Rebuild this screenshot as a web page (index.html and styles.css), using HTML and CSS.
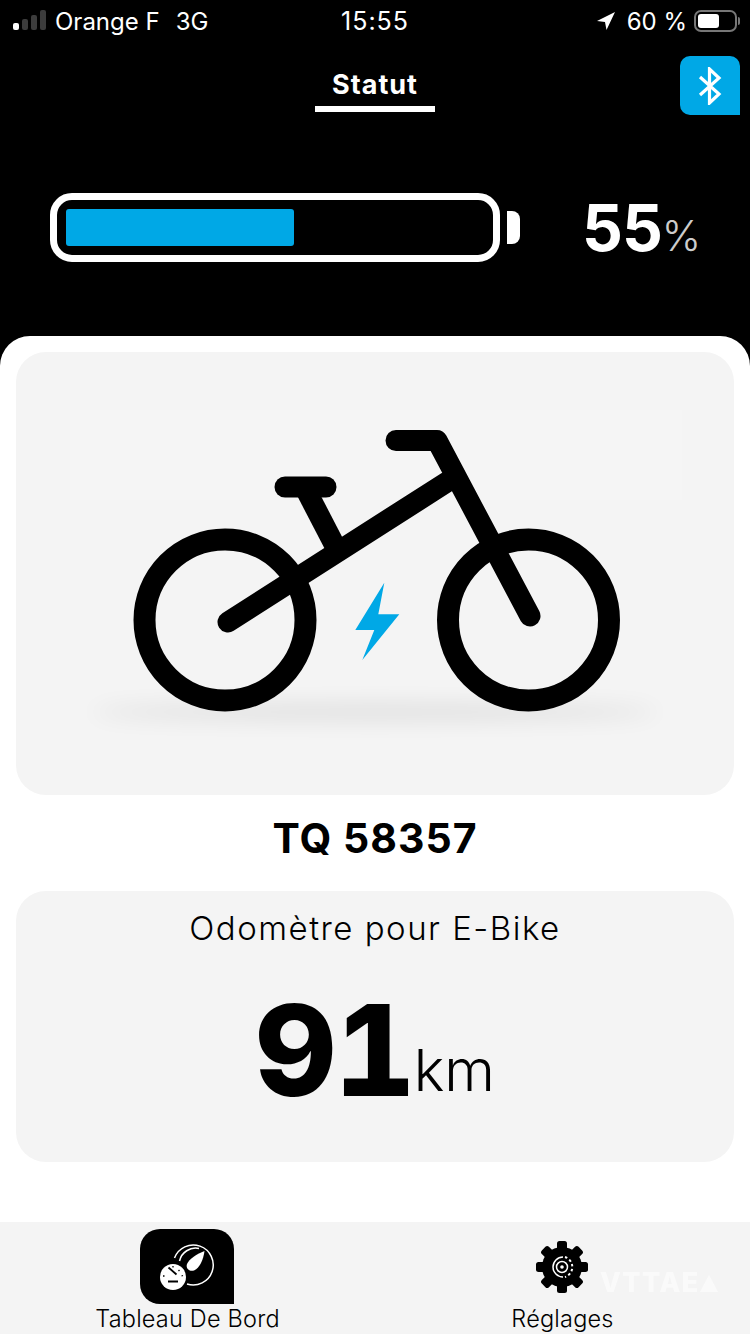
FILE: index.html
```html
<!DOCTYPE html>
<html lang="fr">
<head>
    <meta charset="UTF-8">
    <meta name="viewport" content="width=device-width, initial-scale=1.0">
    <title>Statut</title>
    <link rel="stylesheet" href="styles.css">
</head>
<body>
    <div class="top">
        <div class="statusbar">
            <div class="status-left">
                <svg class="signal" width="33" height="22" viewBox="0 0 33 22">
                    <rect x="0" y="13" width="6" height="7" rx="2" fill="#fff"/>
                    <rect x="9" y="9" width="6" height="11" rx="2" fill="#3c3c3c"/>
                    <rect x="18" y="5" width="6" height="15" rx="2" fill="#3c3c3c"/>
                    <rect x="27" y="0" width="6" height="20" rx="2" fill="#3c3c3c"/>
                </svg>
                <span>Orange F</span>
                <span class="network">3G</span>
            </div>
            <div class="status-time">15:55</div>
            <div class="status-right">
                <svg class="location" width="18" height="18" viewBox="0 0 18 18"><path d="M18 0 L0 9 L8 10 L9.500 18 Z" fill="#fff"/></svg>
                <span>60 %</span>
                <div class="phone-batt"><div class="phone-batt-level"></div></div>
                <div class="phone-batt-tip"></div>
            </div>
        </div>

        <div class="header">
            <div class="tab-title">Statut</div>
            <div class="bt-button">
                <svg width="24" height="38" viewBox="0 0 24 38">
                    <path d="M2 10 L21 27 L11.500 36 L11.500 2 L21 11 L2 28" fill="none" stroke="#fff" stroke-width="3.200"/>
                </svg>
            </div>
        </div>

        <div class="battery-row">
            <div class="battery">
                <div class="battery-level" style="width: 54.5%"></div>
            </div>
            <div class="battery-tip"></div>
            <div class="battery-value">55<span>%</span></div>
        </div>
    </div>

    <div class="sheet">
        <div class="card bike-card">
            <svg class="bike" width="718" height="443" viewBox="16 352 718 443">
                <defs>
                    <filter id="blur" x="-20%" y="-300%" width="140%" height="700%">
                        <feGaussianBlur stdDeviation="11"/>
                    </filter>
                </defs>
                <rect x="70" y="410" width="612" height="90" fill="#f5f5f5"/>
                <ellipse cx="375" cy="712" rx="285" ry="7" fill="#000" opacity="0.1" filter="url(#blur)"/>
                <g fill="none" stroke="#000" stroke-width="22">
                    <circle cx="225" cy="620" r="80.500"/>
                    <circle cx="528.500" cy="620" r="80.500"/>
                </g>
                <g fill="none" stroke="#000" stroke-width="21" stroke-linecap="round" stroke-linejoin="round">
                    <path d="M228 622 L447 482"/>
                    <path d="M530 616 L437 440.500 L396 440.500"/>
                    <path d="M285 487 L326 487"/>
                    <path d="M306 490 L334 544" stroke-linecap="butt"/>
                </g>
                <path d="M384.300 582.700 L378.300 614.300 L399.300 614.300 L362.300 660 L374.300 630 L355.300 630 Z" fill="#00a8e6"/>
            </svg>
        </div>

        <div class="bike-name">TQ 58357</div>

        <div class="card odo-card">
            <div class="odo-label">Odomètre pour E-Bike</div>
            <div class="odo-value">91<span>km</span></div>
        </div>
    </div>

    <nav class="tabbar">
        <div class="tab">
            <div class="tab-icon active">
                <svg width="94" height="75" viewBox="0 0 94 75">
                    <path d="M34.500 29 A20 20 0 1 1 47 55" fill="none" stroke="#fff" stroke-width="1.500"/>
                    <path d="M39.500 32 A16.500 16.500 0 0 1 59 19.500" fill="none" stroke="#fff" stroke-width="1.500"/>
                    <path d="M64.500 22 C63.500 30 60 39 54 41.500 C49 43 45.500 39 47 35 C49 30 57 25 64.500 22 Z" fill="#fff"/>
                    <circle cx="33" cy="48" r="13" fill="#fff"/>
                    <g stroke="#000" fill="none" stroke-width="1.300">
                        <path d="M28.500 38.500 L36.500 45.500" stroke-width="1.800"/>
                        <path d="M28 52.500 L38 52.500" stroke-width="2"/>
                        <path d="M39.500 41 L38.500 42 M43 46.500 L41.500 47 M33 37 L33 38.500 M23 47 L24.500 47"/>
                    </g>
                </svg>
            </div>
            <div class="tab-label">Tableau De Bord</div>
        </div>
        <div class="tab">
            <div class="tab-icon">
                <svg width="54" height="54" viewBox="-27 -27 54 54">
                    <g fill="#000">
                        <circle r="20"/>
                        <rect x="-5" y="-26" width="10" height="52" rx="2.500"/>
                        <rect x="-5" y="-26" width="10" height="52" rx="2.500" transform="rotate(45)"/>
                        <rect x="-5" y="-26" width="10" height="52" rx="2.500" transform="rotate(90)"/>
                        <rect x="-5" y="-26" width="10" height="52" rx="2.500" transform="rotate(135)"/>
                    </g>
                    <g fill="none" stroke="#fff">
                        <circle r="5.500" stroke-width="1.500"/>
                        <circle r="1.800" fill="#fff" stroke="none"/>
                        <path d="M1 -10 A10 10 0 0 0 1 10" stroke-width="1.500"/>
                        <path d="M3 -10 A10.500 10.500 0 0 1 3 10" stroke-width="2" stroke-dasharray="2.500 2.500"/>
                    </g>
                </svg>
            </div>
            <div class="tab-label">Réglages</div>
        </div>
        <div class="watermark">VTTAE<svg width="20" height="20" viewBox="0 0 20 20"><path d="M11 3 L20 20 L2 20 Z" fill="#fff"/></svg></div>
    </nav>
</body>
</html>
```

FILE: styles.css
```css
html, body {
    margin: 0;
    padding: 0;
}

body {
    width: 750px;
    height: 1334px;
    overflow: hidden;
    background: #000;
    font-family: Inter, "Liberation Sans", sans-serif;
    color: #000;
    display: flex;
    flex-direction: column;
}

.top {
    height: 336px;
    display: flex;
    flex-direction: column;
    color: #fff;
}

.statusbar {
    height: 42px;
    padding: 0 10px 0 13px;
    display: flex;
    align-items: center;
    justify-content: space-between;
    font-size: 24px;
    position: relative;
}

.status-left {
    display: flex;
    align-items: center;
    gap: 9px;
}

.network {
    margin-left: 7px;
}

.status-time {
    position: absolute;
    left: 0;
    right: 0;
    text-align: center;
    font-size: 25px;
    letter-spacing: 1px;
}

.status-right {
    display: flex;
    align-items: center;
    gap: 9px;
}

.location {
    margin-right: 3px;
}

.phone-batt {
    width: 43px;
    height: 22px;
    box-sizing: border-box;
    border: 2px solid #777;
    border-radius: 7px;
    padding: 2px;
    margin-left: -2px;
}

.phone-batt-level {
    width: 60%;
    height: 100%;
    background: #fff;
    border-radius: 3px;
}

.phone-batt-tip {
    width: 2px;
    height: 8px;
    background: #777;
    margin-left: -8px;
    border-radius: 0 2px 2px 0;
}

.header {
    height: 70px;
    display: flex;
    justify-content: center;
    position: relative;
}

.tab-title {
    width: 120px;
    height: 70px;
    box-sizing: border-box;
    border-bottom: 6px solid #fff;
    text-align: center;
    font-size: 27px;
    font-weight: 700;
    letter-spacing: 1px;
    line-height: 86px;
}

.bt-button {
    position: absolute;
    right: 10px;
    top: 14px;
    width: 60px;
    height: 59px;
    background: #00a8e6;
    border-radius: 10px 10px 0 10px;
    display: flex;
    align-items: center;
    justify-content: center;
}

.battery-row {
    margin-top: 81px;
    padding-left: 50px;
    display: flex;
    align-items: center;
}

.battery {
    width: 450px;
    height: 69px;
    box-sizing: border-box;
    border: 7px solid #fff;
    border-radius: 22px;
    padding: 9px;
    margin-top: -8px;
}

.battery-level {
    height: 100%;
    background: #00a8e6;
    border-radius: 3px;
}

.battery-tip {
    width: 13px;
    height: 33px;
    margin: -8px 0 0 7px;
    background: #fff;
    border-radius: 0 8px 8px 0;
}

.battery-value {
    margin-left: 62px;
    font-size: 64px;
    font-weight: 700;
    line-height: 69px;
    letter-spacing: -1px;
}

.battery-value span {
    font-size: 42px;
    font-weight: 300;
    color: #ccc;
}

.sheet {
    flex: 1;
    background: #fff;
    border-radius: 30px 30px 0 0;
    padding: 16px 16px 0;
}

.card {
    background: #f4f4f4;
    border-radius: 30px;
}

.bike-card {
    height: 443px;
    overflow: hidden;
}

.bike {
    display: block;
}

.bike-name {
    height: 96px;
    font-size: 41px;
    font-weight: 700;
    letter-spacing: 1px;
    line-height: 86px;
    text-align: center;
}

.odo-card {
    height: 271px;
    text-align: center;
}

.odo-label {
    padding-top: 15px;
    font-size: 33px;
    font-weight: 300;
    letter-spacing: 1.500px;
    line-height: 44px;
}

.odo-value {
    margin-top: 25px;
    font-size: 126px;
    font-weight: 800;
    font-variant-numeric: tabular-nums;
    line-height: 150px;
    letter-spacing: -2px;
}

.odo-value span {
    font-size: 58px;
    font-weight: 300;
    letter-spacing: 0;
    vertical-align: 5px;
}

.tabbar {
    height: 112px;
    background: #f4f4f4;
    display: flex;
    position: relative;
}

.tab {
    position: relative;
    width: 375px;
    display: flex;
    flex-direction: column;
    align-items: center;
}

.tab-icon {
    width: 94px;
    height: 75px;
    margin: 7px 2px 0 0;
    border-radius: 20px 20px 0 20px;
    display: flex;
    align-items: center;
    justify-content: center;
}

.tab-icon.active {
    background: #000;
}

.tab-label {
    font-size: 23.500px;
    font-weight: 300;
    letter-spacing: 0.200px;
    line-height: 30px;
    white-space: nowrap;
}

.watermark {
    position: absolute;
    left: 600px;
    top: 44px;
    color: #fff;
    opacity: 0.6;
    font-size: 27px;
    font-weight: 800;
    letter-spacing: 1.500px;
    display: flex;
    align-items: flex-end;
}

.watermark svg {
    margin: 0 0 7px -2px;
}
```
